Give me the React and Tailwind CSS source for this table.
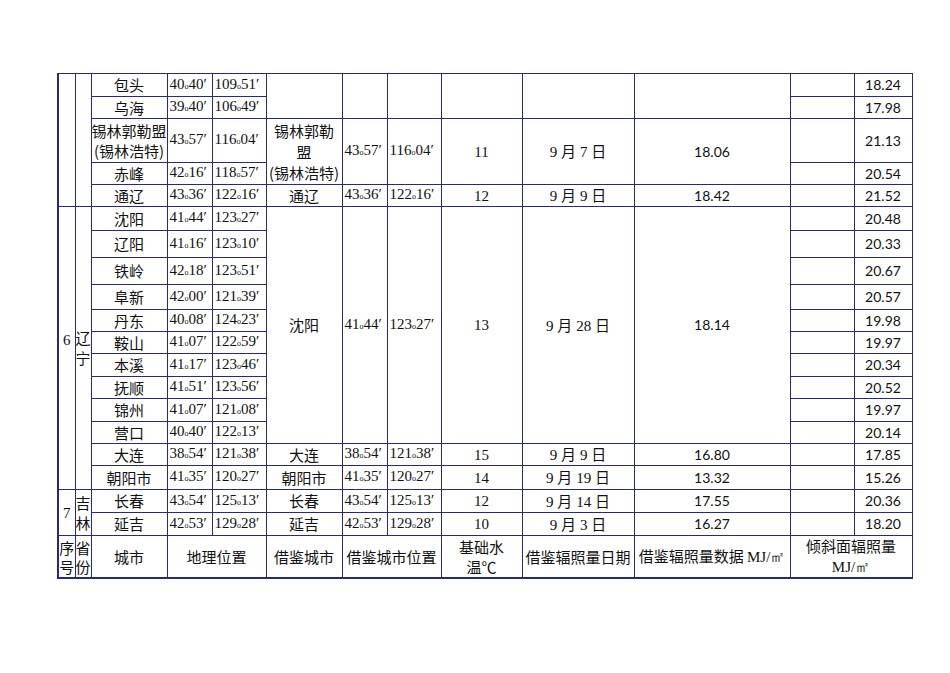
const cell = 'border border-[#2a2a72] p-0 text-center align-middle leading-[18px]'
const cn = "font-['Noto_Sans_CJK_SC',sans-serif] text-[15px] text-[#111]"
const serif = "font-['Liberation_Serif','DejaVu_Serif',serif] text-[15px] text-[#111]"
const num = "font-['Lato',sans-serif] text-[14px] text-[#111]"

function Deg({ v }) {
  const [a, b] = v.split(' ')
  return (
    <span className="whitespace-nowrap">
      {a}
      <span className="text-[8px]">o</span>
      {b}′
    </span>
  )
}

function Pos({ v, rowSpan }) {
  return (
    <td rowSpan={rowSpan} className={`${cell} ${serif} text-left pl-[2px]`}>
      <Deg v={v} />
    </td>
  )
}

function Date({ m, d, rowSpan }) {
  return (
    <td rowSpan={rowSpan} className={`${cell} ${serif}`}>
      {m} <span className={cn}>月</span> {d} <span className={cn}>日</span>
    </td>
  )
}

const liaoning = [
  ['辽阳', '41 16', '123 10', '20.33', 'h-[27px]'],
  ['铁岭', '42 18', '123 51', '20.67', 'h-[27px]'],
  ['阜新', '42 00', '121 39', '20.57', 'h-[25px]'],
  ['丹东', '40 08', '124 23', '19.98', 'h-[22px]'],
  ['鞍山', '41 07', '122 59', '19.97', 'h-[22px]'],
  ['本溪', '41 17', '123 46', '20.34', 'h-[23px]'],
  ['抚顺', '41 51', '123 56', '20.52', 'h-[22px]'],
  ['锦州', '41 07', '121 08', '19.97', 'h-[23px]'],
  ['营口', '40 40', '122 13', '20.14', 'h-[22px]'],
]

function Full({ city, lat, lon, water, m, d, data, tilt }) {
  return (
    <>
      <td className={`${cell} ${cn}`}>{city}</td>
      <Pos v={lat} />
      <Pos v={lon} />
      <td className={`${cell} ${cn}`}>{city}</td>
      <Pos v={lat} />
      <Pos v={lon} />
      <td className={`${cell} ${serif}`}>{water}</td>
      <Date m={m} d={d} />
      <td className={`${cell} ${num}`}>{data}</td>
      <td className={cell}></td>
      <td className={`${cell} ${num}`}>{tilt}</td>
    </>
  )
}

export default function App() {
  return (
    <div className="min-h-[673px] w-[950px] bg-white pl-[57px] pt-[73px]">
      <table className="w-[854px] table-fixed border-collapse border-l-2 border-l-[#2a2a72]">
        <colgroup>
          <col className="w-[17px]" />
          <col className="w-[16px]" />
          <col className="w-[76px]" />
          <col className="w-[45px]" />
          <col className="w-[54px]" />
          <col className="w-[76px]" />
          <col className="w-[45px]" />
          <col className="w-[54px]" />
          <col className="w-[81px]" />
          <col className="w-[112px]" />
          <col className="w-[156px]" />
          <col className="w-[64px]" />
          <col className="w-[58px]" />
        </colgroup>
        <tbody>
          <tr className="h-[23px]">
            <td rowSpan={5} className={cell}></td>
            <td rowSpan={5} className={cell}></td>
            <td className={`${cell} ${cn}`}>包头</td>
            <Pos v="40 40" />
            <Pos v="109 51" />
            <td rowSpan={2} className={cell}></td>
            <td rowSpan={2} className={cell}></td>
            <td rowSpan={2} className={cell}></td>
            <td rowSpan={2} className={cell}></td>
            <td rowSpan={2} className={cell}></td>
            <td rowSpan={2} className={cell}></td>
            <td className={cell}></td>
            <td className={`${cell} ${num}`}>18.24</td>
          </tr>
          <tr className="h-[22px]">
            <td className={`${cell} ${cn}`}>乌海</td>
            <Pos v="39 40" />
            <Pos v="106 49" />
            <td className={cell}></td>
            <td className={`${cell} ${num}`}>17.98</td>
          </tr>
          <tr className="h-[44px]">
            <td className={`${cell} ${cn} leading-[20px]`}>
              锡林郭勒盟
              <br />
              (锡林浩特)
            </td>
            <Pos v="43 57" />
            <Pos v="116 04" />
            <td rowSpan={2} className={`${cell} ${cn} leading-[21px]`}>
              锡林郭勒
              <br />盟<br />
              (锡林浩特)
            </td>
            <Pos v="43 57" rowSpan={2} />
            <Pos v="116 04" rowSpan={2} />
            <td rowSpan={2} className={`${cell} ${serif}`}>11</td>
            <Date m="9" d="7" rowSpan={2} />
            <td rowSpan={2} className={`${cell} ${num}`}>18.06</td>
            <td className={cell}></td>
            <td className={`${cell} ${num}`}>21.13</td>
          </tr>
          <tr className="h-[22px]">
            <td className={`${cell} ${cn}`}>赤峰</td>
            <Pos v="42 16" />
            <Pos v="118 57" />
            <td className={cell}></td>
            <td className={`${cell} ${num}`}>20.54</td>
          </tr>
          <tr className="h-[22px]">
            <Full city="通辽" lat="43 36" lon="122 16" water="12" m="9" d="9" data="18.42" tilt="21.52" />
          </tr>
          <tr className="h-[24px]">
            <td rowSpan={12} className={`${cell} ${serif} pb-[17px]`}>6</td>
            <td rowSpan={12} className={`${cell} ${cn} leading-[20px]`}>辽宁</td>
            <td className={`${cell} ${cn}`}>沈阳</td>
            <Pos v="41 44" />
            <Pos v="123 27" />
            <td rowSpan={10} className={`${cell} ${cn}`}>沈阳</td>
            <Pos v="41 44" rowSpan={10} />
            <Pos v="123 27" rowSpan={10} />
            <td rowSpan={10} className={`${cell} ${serif}`}>13</td>
            <Date m="9" d="28" rowSpan={10} />
            <td rowSpan={10} className={`${cell} ${num}`}>18.14</td>
            <td className={cell}></td>
            <td className={`${cell} ${num}`}>20.48</td>
          </tr>
          {liaoning.map(([city, lat, lon, tilt, h]) => (
            <tr key={city} className={h}>
              <td className={`${cell} ${cn}`}>{city}</td>
              <Pos v={lat} />
              <Pos v={lon} />
              <td className={cell}></td>
              <td className={`${cell} ${num}`}>{tilt}</td>
            </tr>
          ))}
          <tr className="h-[22px]">
            <Full city="大连" lat="38 54" lon="121 38" water="15" m="9" d="9" data="16.80" tilt="17.85" />
          </tr>
          <tr className="h-[24px]">
            <Full city="朝阳市" lat="41 35" lon="120 27" water="14" m="9" d="19" data="13.32" tilt="15.26" />
          </tr>
          <tr className="h-[23px]">
            <td rowSpan={2} className={`${cell} ${serif}`}>7</td>
            <td rowSpan={2} className={`${cell} ${cn} leading-[20px]`}>吉林</td>
            <Full city="长春" lat="43 54" lon="125 13" water="12" m="9" d="14" data="17.55" tilt="20.36" />
          </tr>
          <tr className="h-[23px]">
            <Full city="延吉" lat="42 53" lon="129 28" water="10" m="9" d="3" data="16.27" tilt="18.20" />
          </tr>
          <tr className={`h-[42px] ${cn}`}>
            <td className={`${cell} border-b-2 leading-[19px]`}>序号</td>
            <td className={`${cell} border-b-2 leading-[19px]`}>省份</td>
            <td className={`${cell} border-b-2`}>城市</td>
            <td colSpan={2} className={`${cell} border-b-2`}>地理位置</td>
            <td className={`${cell} border-b-2`}>借鉴城市</td>
            <td colSpan={2} className={`${cell} border-b-2`}>借鉴城市位置</td>
            <td className={`${cell} border-b-2 leading-[20px]`}>
              基础水
              <br />
              温℃
            </td>
            <td className={`${cell} border-b-2`}>借鉴辐照量日期</td>
            <td className={`${cell} border-b-2 whitespace-nowrap`}>
              借鉴辐照量数据 <span className={serif}>MJ/㎡</span>
            </td>
            <td colSpan={2} className={`${cell} border-b-2 leading-[20px]`}>
              倾斜面辐照量
              <br />
              <span className={serif}>MJ/㎡</span>
            </td>
          </tr>
        </tbody>
      </table>
    </div>
  )
}
